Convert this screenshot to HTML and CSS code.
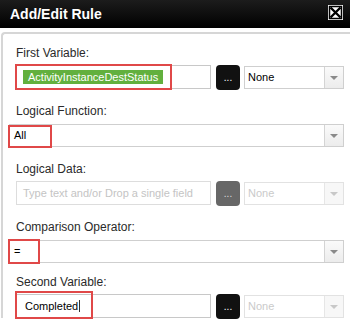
FILE: index.html
```html
<!DOCTYPE html>
<html lang="en">
<head>
    <meta charset="UTF-8">
    <title>Add/Edit Rule</title>
    <link rel="stylesheet" href="styles.css">
</head>
<body>

<div class="dialog">
    <div class="titlebar">
        <span class="title">Add/Edit Rule</span>
        <svg class="close" width="15" height="15" viewBox="0 0 15 15">
            <rect x="0" y="0" width="15" height="15" fill="#fff"/>
            <rect x="1.5" y="1.5" width="12" height="12" fill="#fff" stroke="#000" stroke-width="1.5"/>
            <path d="M2.5 2.5 L12.5 12.5 M12.5 2.5 L2.5 12.5" stroke="#000" stroke-width="2.4"/>
        </svg>
    </div>

    <div class="panel">
        <div class="group">
            <label>First Variable:</label>
            <div class="row">
                <div class="field">
                    <span class="tag">ActivityInstanceDestStatus</span>
                    <i class="mark mark-var"></i>
                </div>
                <button class="dots">...</button>
                <div class="select small"><span>None</span><i class="arrow"></i></div>
            </div>
        </div>

        <div class="group">
            <label>Logical Function:</label>
            <div class="row">
                <div class="select wide">
                    <span>All</span><i class="arrow"></i>
                    <i class="mark mark-all"></i>
                </div>
            </div>
        </div>

        <div class="group">
            <label>Logical Data:</label>
            <div class="row">
                <div class="field disabled"><span class="placeholder">Type text and/or Drop a single field</span></div>
                <button class="dots off">...</button>
                <div class="select small disabled"><span>None</span><i class="arrow"></i></div>
            </div>
        </div>

        <div class="group tight">
            <label>Comparison Operator:</label>
            <div class="row">
                <div class="select wide">
                    <span>=</span><i class="arrow"></i>
                    <i class="mark mark-op"></i>
                </div>
            </div>
        </div>

        <div class="group">
            <label>Second Variable:</label>
            <div class="row">
                <div class="field">
                    <span class="value">Completed</span><span class="caret"></span>
                    <i class="mark mark-second"></i>
                </div>
                <button class="dots">...</button>
                <div class="select small disabled"><span>None</span><i class="arrow"></i></div>
            </div>
        </div>
    </div>
</div>

</body>
</html>
```

FILE: styles.css
```css
body {
    margin: 0;
    background: #fff;
    font-family: 'Liberation Sans', Arial, sans-serif;
    color: #222;
    overflow: hidden;
}

.dialog {
    height: 326px;
    overflow: hidden;
}

.titlebar {
    height: 28px;
    background: linear-gradient(#1c1c1c, #000);
    display: flex;
    align-items: center;
    justify-content: space-between;
    padding: 0 7px 0 10px;
}

.title {
    color: #fff;
    font-size: 14px;
    font-weight: bold;
}

.close {
    display: block;
    margin-top: -3px;
}

.panel {
    margin: 4px 0 0 1px;
    border-top: 2px solid #d6d6d6;
    border-left: 2px solid #d6d6d6;
    border-top-left-radius: 4px;
    padding: 12px 0 0 13px;
}

.group {
    margin-bottom: 15px;
}

.group.tight {
    margin-bottom: 12px;
}

label {
    display: block;
    font-size: 12px;
    line-height: 14px;
    color: #2a2a2a;
    margin-bottom: 5px;
}

.row {
    display: flex;
    align-items: center;
    height: 24px;
}

.field {
    position: relative;
    box-sizing: border-box;
    width: 195px;
    height: 24px;
    border: 1px solid #c8c8c8;
    display: flex;
    align-items: center;
    padding-left: 6px;
    font-size: 11px;
}

.field.disabled {
    border-color: #ddd;
}

.tag {
    background: #62b03e;
    color: #fff;
    padding: 1px 5px;
    line-height: 12px;
}

.value {
    color: #000;
    margin-left: 2px;
}

.caret {
    display: inline-block;
    width: 1px;
    height: 12px;
    background: #333;
    margin-left: 1px;
}

.placeholder {
    color: #c4c4c4;
}

.dots {
    box-sizing: border-box;
    width: 24px;
    height: 25px;
    margin-left: 5px;
    padding: 0 0 4px;
    border: none;
    border-radius: 4px;
    background: #111;
    color: #fff;
    font-family: inherit;
    font-size: 10px;
    line-height: 25px;
}

.dots.off {
    background: #676767;
    color: #ddd;
}

.select {
    position: relative;
    box-sizing: border-box;
    height: 23px;
    border: 1px solid #cfcfcf;
    display: flex;
    align-items: center;
    font-size: 11px;
    color: #000;
    background: #fff;
}

.select span {
    padding-left: 4px;
    flex: 1;
}

.select.small {
    width: 100px;
    margin-left: 4px;
}

.select.small span {
    padding-left: 3px;
}

.select.wide {
    width: 335px;
    margin-left: -7px;
}

.select.disabled {
    border-color: #e2e2e2;
    color: #cacaca;
}

.arrow {
    width: 18px;
    align-self: stretch;
    border-left: 1px solid #d4d4d4;
    background: linear-gradient(#fafafa, #ececec);
    position: relative;
}

.arrow::after {
    content: '';
    position: absolute;
    left: 5px;
    top: 9px;
    border-left: 4px solid transparent;
    border-right: 4px solid transparent;
    border-top: 4px solid #8a8a8a;
}

.disabled .arrow {
    border-left-color: #e6e6e6;
    background: #f7f7f7;
}

.disabled .arrow::after {
    border-top-color: #c8c8c8;
}

/* red annotation boxes drawn over the fields */
.mark {
    position: absolute;
    box-sizing: border-box;
    border: 2px solid #e04848;
}

.mark-var {
    left: -2px;
    top: -2px;
    width: 157px;
    height: 26px;
}

.mark-all {
    left: -2px;
    top: 0;
    width: 44px;
    height: 23px;
}

.mark-op {
    left: -2px;
    top: -2px;
    width: 32px;
    height: 25px;
}

.mark-second {
    left: -2px;
    top: -4px;
    width: 78px;
    height: 28px;
}
```
